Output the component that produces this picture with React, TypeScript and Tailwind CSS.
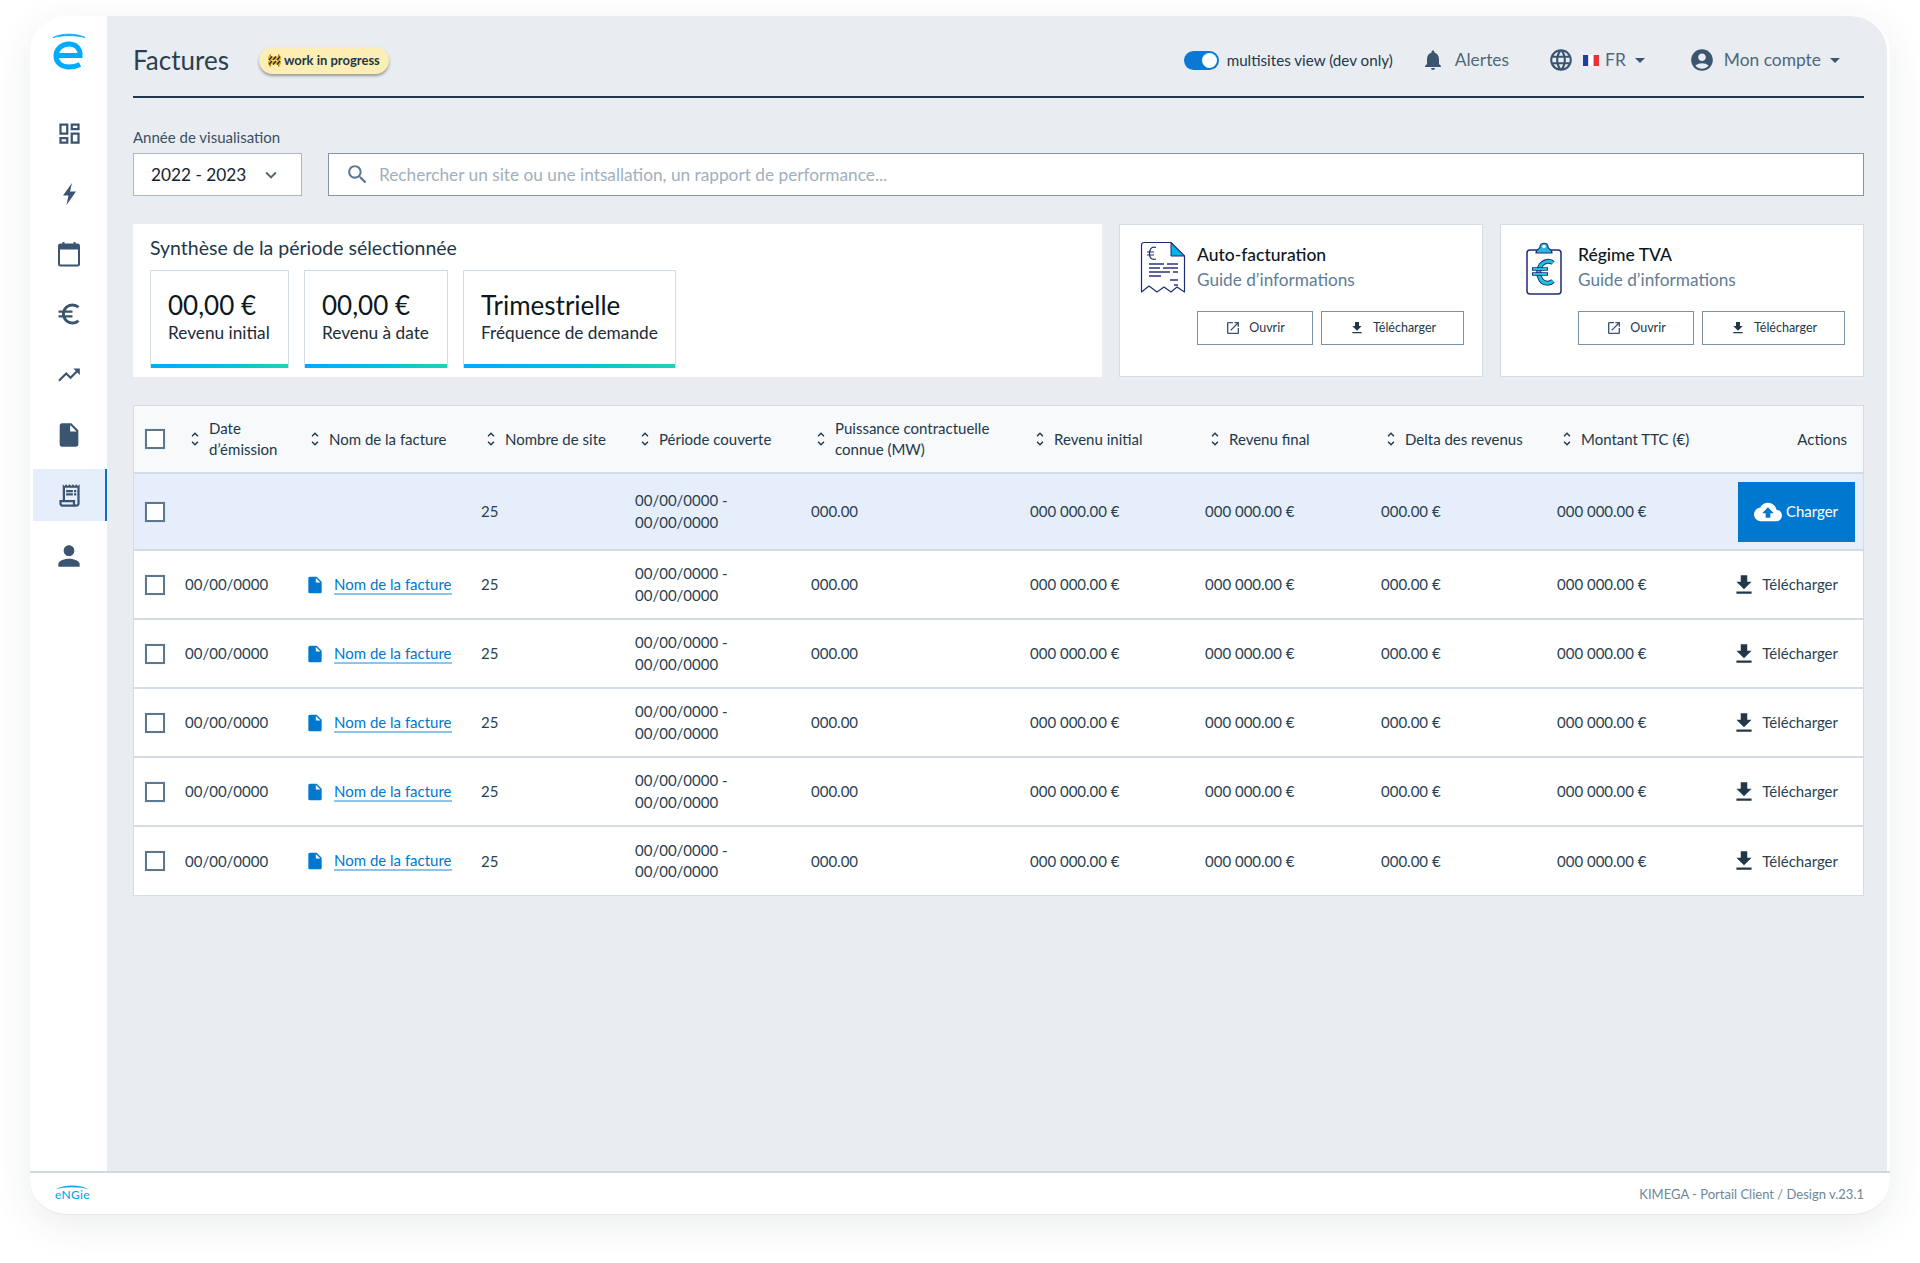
import {
  MdAccountCircle,
  MdArrowDropDown,
  MdCloudUpload,
  MdEuroSymbol,
  MdFileDownload,
  MdInsertDriveFile,
  MdKeyboardArrowDown,
  MdLanguage,
  MdNotifications,
  MdOpenInNew,
  MdOutlineDashboard,
  MdOutlineReceiptLong,
  MdPerson,
  MdSearch,
  MdTrendingUp,
  MdUnfoldMore,
} from "react-icons/md";

const ROW_GRID =
  "grid grid-cols-[51px_122px_174px_154px_176px_219px_175px_176px_176px_150px_1fr] items-center";

const AMOUNT = "000 000.00 €";

function CalendarIcon() {
  return (
    <svg width="24" height="26" viewBox="0 0 24 26" fill="none">
      <rect x="2" y="3.5" width="20" height="21" rx="1.5" stroke="#3b5570" strokeWidth="2" />
      <rect x="2" y="3.5" width="20" height="5" fill="#3b5570" />
      <rect x="5.5" y="1" width="2" height="4" fill="#3b5570" />
      <rect x="16.5" y="1" width="2" height="4" fill="#3b5570" />
    </svg>
  );
}

function BoltIcon() {
  return (
    <svg width="13" height="22" viewBox="0 0 13 22" fill="#3b5570">
      <path d="M9 0L0 12.5H5.5L3.5 22L13 8.5H7L9 0Z" />
    </svg>
  );
}

function Logo() {
  return (
    <svg width="36" height="40" viewBox="0 0 36 40" fill="none">
      <path d="M2 5.5C11 1 25 1 34 5.5C25 3 11 3 2 5.5Z" fill="#00aaff" stroke="#00aaff" strokeWidth="0.8" />
      <path
        d="M5 23.5H29C29.5 16 24.5 12 18 12C11 12 5 17 5 24C5 31 11 35 18 35C22.5 35 26 34 29 32.5"
        stroke="#00aaff"
        strokeWidth="5"
      />
    </svg>
  );
}

function ReceiptArt() {
  return (
    <svg width="46" height="54" viewBox="0 0 46 54" fill="none">
      <path d="M31 1.5L44 15H31Z" fill="#00b5e8" />
      <path
        d="M31 1.5H4C2.5 1.5 1.5 2.5 1.5 4V51L9 45L17 51L24 46L31 51L37 46L44.5 51V15L31 1.5Z"
        stroke="#1f2f73"
        strokeWidth="1.2"
        strokeLinejoin="round"
      />
      <path d="M31 1.5V15H44.5" stroke="#1f2f73" strokeWidth="1" />
      <path d="M16 6.5C11 5 9.5 9 9.5 12.5C9.5 16 11 19.5 16 18M7 11H14M7 14H14" stroke="#1f2f73" strokeWidth="1.2" />
      <path
        d="M9 23H24M27 23H38M9 27H20M23 27H38M9 31H30M33 31H38M9 35H21M30 39H38M34 44H38"
        stroke="#27367f"
        strokeWidth="1.6"
      />
    </svg>
  );
}

function ClipboardArt() {
  return (
    <svg width="36" height="54" viewBox="0 0 36 54" fill="none">
      <rect x="1" y="9" width="34" height="44" rx="3" stroke="#1f2f73" strokeWidth="1.5" />
      <path d="M10 12C10 8 14 8 14 6C14 1 22 1 22 6C22 8 26 8 26 12Z" fill="#2bb5e0" stroke="#1f2f73" strokeWidth="1.2" />
      <circle cx="18" cy="5.5" r="1.8" fill="#ffffff" />
      <path
        d="M27 22C24 19 18 20 15 24C12 28 12 35 15 39C18 43 24 43 27 40"
        stroke="#1f2f73"
        strokeWidth="5"
      />
      <path
        d="M27 22C24 19 18 20 15 24C12 28 12 35 15 39C18 43 24 43 27 40"
        stroke="#19c6e0"
        strokeWidth="3"
      />
      <path d="M6 28H22M6 33H22" stroke="#1f2f73" strokeWidth="3.6" />
      <path d="M7 28H21M7 33H21" stroke="#19c6e0" strokeWidth="1.8" />
    </svg>
  );
}

function RoadworkIcon() {
  return (
    <svg width="13" height="13" viewBox="0 0 13 13">
      <rect x="1.5" y="0.5" width="1.5" height="12" fill="#9a7b2c" />
      <rect x="10" y="0.5" width="1.5" height="12" fill="#9a7b2c" />
      <rect x="0" y="2.5" width="13" height="3.5" fill="#e8b21a" />
      <rect x="0" y="7" width="13" height="3.5" fill="#e8b21a" />
      <path d="M1 6L4 2.5M5 6L8 2.5M9 6L12 2.5M1 10.5L4 7M5 10.5L8 7M9 10.5L12 7" stroke="#2b2b2b" strokeWidth="1.2" />
    </svg>
  );
}

function Flag() {
  return (
    <svg width="16" height="11" viewBox="0 0 16 11">
      <rect width="5.4" height="11" fill="#1f3f9e" />
      <rect x="5.4" width="5.2" height="11" fill="#ffffff" />
      <rect x="10.6" width="5.4" height="11" fill="#e8313a" />
    </svg>
  );
}

function Checkbox() {
  return <span className="block w-5 h-5 bg-white border-2 border-[#5b7890] shadow-[0_0_1px_rgba(0,0,0,0.2)]" />;
}

function Sidebar() {
  const items = [
    <MdOutlineDashboard size={27} />,
    <BoltIcon />,
    <CalendarIcon />,
    <MdEuroSymbol size={28} />,
    <MdTrendingUp size={26} />,
    <MdInsertDriveFile size={28} />,
    <MdOutlineReceiptLong size={27} />,
    <MdPerson size={32} />,
  ];
  return (
    <aside className="w-[77px] shrink-0 pl-[3px] text-[#3b5570]">
      <div className="h-[87px] flex items-start justify-center pt-[16px] pr-[2px]">
        <Logo />
      </div>
      <nav className="flex flex-col">
        {items.map((icon, i) => (
          <div
            key={i}
            className={
              i === 6
                ? "h-[52px] my-[4.2px] flex items-center justify-center bg-[#e6eefb] border-r-2 border-[#0b6fd0]"
                : "h-[52px] my-[4.2px] flex items-center justify-center pr-[2px]"
            }
          >
            {icon}
          </div>
        ))}
      </nav>
    </aside>
  );
}

function Header() {
  return (
    <header className="h-[82px] flex items-center border-b-2 border-[#22384a] pt-[9px]">
      <h1 className="text-[26px] text-[#2a3f50]">Factures</h1>
      <span className="ml-[30px] h-[27px] px-[9px] flex items-center gap-[3px] rounded-full bg-[#fdeeb5] text-[13px] font-bold text-[#22384a] shadow-[0_2px_3px_rgba(0,0,0,0.35)]">
        <RoadworkIcon />
        work in progress
      </span>
      <div className="ml-auto flex items-center text-[#4f677b]">
        <span className="w-[35px] h-[19px] rounded-full bg-[#0b78d4] flex items-center justify-end pr-[2px]">
          <span className="w-[15px] h-[15px] rounded-full bg-white" />
        </span>
        <span className="ml-[8px] text-[15.2px] text-[#22384a]">multisites view (dev only)</span>
        <MdNotifications size={24} className="ml-[28px] text-[#3b5570]" />
        <span className="ml-[10px] text-[17.4px]">Alertes</span>
        <MdLanguage size={26} className="ml-[39px] text-[#3b5570]" />
        <span className="ml-[9px]">
          <Flag />
        </span>
        <span className="ml-[6px] text-[17.4px]">FR</span>
        <MdArrowDropDown size={24} className="ml-[2px] text-[#3b5570]" />
        <MdAccountCircle size={26} className="ml-[37px] text-[#3b5570]" />
        <span className="ml-[9px] text-[17.4px]">Mon compte</span>
        <MdArrowDropDown size={24} className="ml-[2px] mr-[17px] text-[#3b5570]" />
      </div>
    </header>
  );
}

function Filters() {
  return (
    <div className="mt-[29px]">
      <div className="text-[15px] leading-[20px] text-[#3a5063] h-[26px]">Année de visualisation</div>
      <div className="flex gap-[26px]">
        <div className="w-[169px] h-[43px] bg-white border border-[#a9b8c4] flex items-center pl-[17px] text-[17.25px] text-[#15232e]">
          2022 - 2023
          <MdKeyboardArrowDown size={22} className="ml-[14px] text-[#4f677b]" />
        </div>
        <div className="flex-1 h-[43px] bg-white border border-[#8298a8] flex items-center pl-[16px] text-[17.25px] text-[#a0b0bd]">
          <MdSearch size={25} className="text-[#5b7890]" />
          <span className="ml-[9px]">Rechercher un site ou une intsallation, un rapport de performance...</span>
        </div>
      </div>
    </div>
  );
}

function Metric({ value, label, w }: { value: string; label: string; w: string }) {
  return (
    <div className={`${w} h-[98px] bg-white border border-[#d5dde4] border-b-0 flex flex-col`}>
      <div className="flex-1 pl-[17px] pt-[18px]">
        <div className="text-[26px] leading-[32px] text-[#0c1720]">{value}</div>
        <div className="mt-[1px] text-[17.25px] leading-[22px] text-[#1c2b37]">{label}</div>
      </div>
      <div className="h-[4px] bg-gradient-to-r from-[#00aaff] to-[#1fd3b5]" />
    </div>
  );
}

function GuideCard({ title, art, artWidth }: { title: string; art: React.ReactNode; artWidth: string }) {
  return (
    <div className="flex-1 h-[153px] bg-white border border-[#d5dde4] flex pt-[16px] pl-[20px] pr-[18px]">
      <div className={`${artWidth} shrink-0`}>{art}</div>
      <div className="flex-1">
        <div className="mt-[1px] text-[17.5px] leading-[26px] font-medium text-[#0c1720]">{title}</div>
        <div className="-mt-[1px] text-[17.2px] leading-[26px] text-[#5f7d95]">Guide d’informations</div>
        <div className="mt-[18px] flex gap-[8px] text-[12.5px] text-[#22384a]">
          <span className="w-[116px] h-[34px] border border-[#7c93a5] flex items-center justify-center gap-[8px]">
            <MdOpenInNew size={16} className="text-[#3b5570]" />
            Ouvrir
          </span>
          <span className="flex-1 h-[34px] border border-[#7c93a5] flex items-center justify-center gap-[8px]">
            <MdFileDownload size={16} className="text-[#22384a]" />
            Télécharger
          </span>
        </div>
      </div>
    </div>
  );
}

function Summary() {
  return (
    <section className="mt-[28px] flex gap-[17px]">
      <div className="w-[969px] h-[153px] bg-white pl-[17px] pt-[11px]">
        <h2 className="text-[19.5px] leading-[26px] text-[#22384a]">Synthèse de la période sélectionnée</h2>
        <div className="mt-[9px] flex gap-[15px]">
          <Metric value="00,00 €" label="Revenu initial" w="w-[139px]" />
          <Metric value="00,00 €" label="Revenu à date" w="w-[144px]" />
          <Metric value="Trimestrielle" label="Fréquence de demande" w="w-[213px]" />
        </div>
      </div>
      <GuideCard title="Auto-facturation" art={<ReceiptArt />} artWidth="w-[57px]" />
      <GuideCard
        title="Régime TVA"
        art={
          <div className="ml-[5px]">
            <ClipboardArt />
          </div>
        }
        artWidth="w-[57px]"
      />
    </section>
  );
}

function SortHead({ children, className }: { children: React.ReactNode; className?: string }) {
  return (
    <div className={`flex items-center gap-[5px] pl-[1px] ${className ?? ""}`}>
      <MdUnfoldMore size={18} className="shrink-0 text-[#22384a]" />
      <span>{children}</span>
    </div>
  );
}

function CommonCells() {
  return (
    <>
      <div>25</div>
      <div className="leading-[21.5px]">
        00/00/0000 -
        <br />
        00/00/0000
      </div>
      <div>000.00</div>
      <div>{AMOUNT}</div>
      <div>{AMOUNT}</div>
      <div>000.00 €</div>
      <div>{AMOUNT}</div>
    </>
  );
}

function InvoiceTable() {
  const rows = [0, 1, 2, 3, 4];
  return (
    <section className="mt-[28px] border border-[#d3dce4] text-[15px] text-[#2a3f50]">
      <div className={`${ROW_GRID} h-[68px] bg-[#f7f9fb] border-b-2 border-[#d3dce4] text-[#22384a]`}>
        <div className="pl-[11px]">
          <Checkbox />
        </div>
        <SortHead>
          <span className="block leading-[21px]">
            Date
            <br />
            d’émission
          </span>
        </SortHead>
        <SortHead className="-ml-[2px]">Nom de la facture</SortHead>
        <SortHead>Nombre de site</SortHead>
        <SortHead>Période couverte</SortHead>
        <SortHead>
          <span className="block leading-[21px]">
            Puissance contractuelle
            <br />
            connue (MW)
          </span>
        </SortHead>
        <SortHead>Revenu initial</SortHead>
        <SortHead>Revenu final</SortHead>
        <SortHead>Delta des revenus</SortHead>
        <SortHead>Montant TTC (€)</SortHead>
        <div className="text-right pr-[16px]">Actions</div>
      </div>
      <div className={`${ROW_GRID} h-[77px] bg-[#e6eefb] border-b-2 border-[#d3dce4]`}>
        <div className="pl-[11px]">
          <Checkbox />
        </div>
        <div />
        <div />
        <CommonCells />
        <div className="flex justify-end pr-[8px]">
          <span className="w-[117px] h-[60px] bg-[#0078cf] text-white flex items-center justify-center gap-[4px] pr-[1px]">
            <MdCloudUpload size={28} />
            Charger
          </span>
        </div>
      </div>
      {rows.map((r) => (
        <div
          key={r}
          className={`${ROW_GRID} bg-white ${r < 4 ? "h-[69px] border-b-2 border-[#d3dce4]" : "h-[68px]"}`}
        >
          <div className="pl-[11px]">
            <Checkbox />
          </div>
          <div>00/00/0000</div>
          <div className="flex items-center gap-[9px] -ml-[2px]">
            <MdInsertDriveFile size={20} className="text-[#0078cf]" />
            <span className="text-[#0078cf] border-b-2 border-[#8cc4ea] leading-[18px]">Nom de la facture</span>
          </div>
          <CommonCells />
          <div className="flex items-center justify-end gap-[5px] pr-[25px]">
            <MdFileDownload size={26} className="text-[#22384a]" />
            Télécharger
          </div>
        </div>
      ))}
    </section>
  );
}

function Footer() {
  return (
    <footer className="h-[43px] shrink-0 border-t-2 border-[#cfd8e2] flex items-start justify-between pl-[25px] pr-[26px]">
      <div className="mt-[11px] flex flex-col items-center text-[#0aa5f5]">
        <svg width="34" height="6" viewBox="0 0 34 6" className="-mb-[1px]">
          <path d="M0 5.5C9 0 25 0 34 5.5C25 2.5 9 2.5 0 5.5Z" fill="#0aa5f5" />
        </svg>
        <span className="text-[12px] leading-[11px] font-medium tracking-[0.3px]">eNGie</span>
      </div>
      <div className="mt-[12px] text-[13px] leading-[18px] text-[#6f8699]">KIMEGA - Portail Client / Design v.23.1</div>
    </footer>
  );
}

export default function App() {
  return (
    <div className="min-h-[1263px] bg-white pt-[16px] pl-[30px] [font-family:Lato,sans-serif]">
      <div className="w-[1860px] h-[1199px] rounded-[36px] bg-white flex flex-col overflow-hidden shadow-[0_10px_40px_rgba(30,50,70,0.09)] border-b border-[#e8e8e8]">
        <div className="flex-1 min-h-0 flex">
          <Sidebar />
          <main className="flex-1 mr-[3px] rounded-tr-[36px] bg-[#e9edf1] pl-[26px] pr-[23px]">
            <Header />
            <Filters />
            <Summary />
            <InvoiceTable />
          </main>
        </div>
        <Footer />
      </div>
    </div>
  );
}
